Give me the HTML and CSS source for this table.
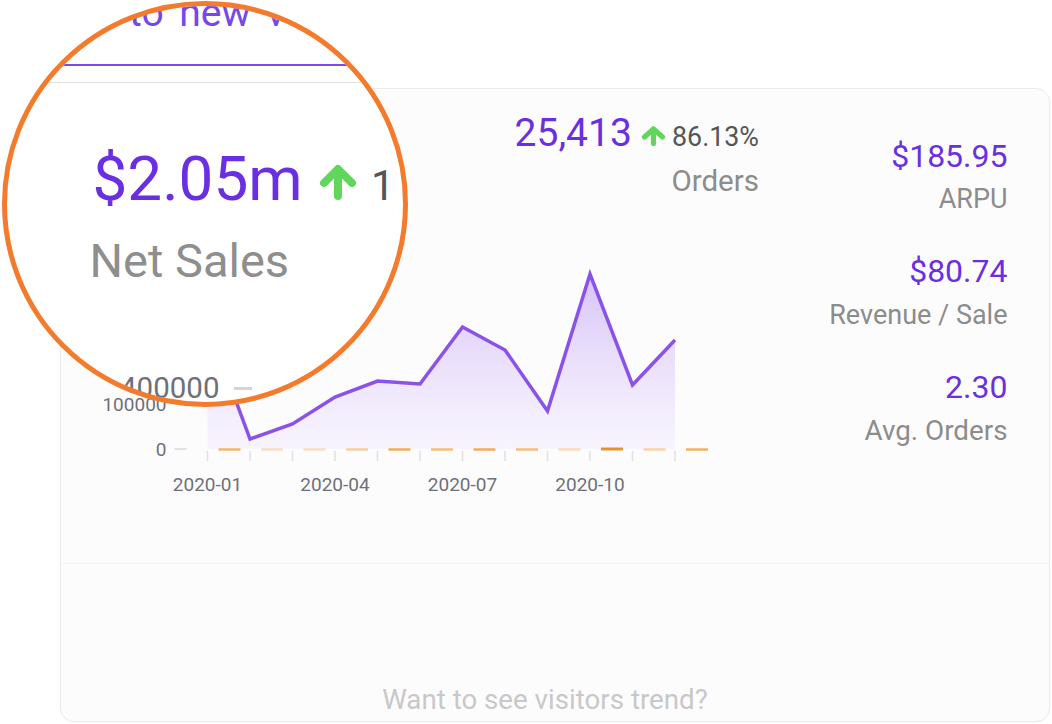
FILE: index.html
```html
<!DOCTYPE html>
<html lang="en">
<head>
<meta charset="utf-8">
<title>Sales overview</title>
<link rel="stylesheet" href="styles.css">
</head>
<body>
<div class="page">
  <div class="topbar"></div>

  <section class="card">
    <div class="card-top">
      <div class="main">
        <div class="kpis">
          <div class="kpi kpi-orders">
            <div class="kpi-value">
              <span class="num">25,413</span>
              <svg class="up" viewBox="0 0 25 20"><path d="M12.5 17.5V5M3.5 11L12.5 2.8L21.5 11"/></svg>
              <span class="pct">86.13%</span>
            </div>
            <div class="kpi-label label-orders">Orders</div>
          </div>
        </div>

        <svg class="chart" width="697" height="290" viewBox="61.5 230 697 290">
          <defs>
            <linearGradient id="area" gradientUnits="userSpaceOnUse" x1="0" y1="275" x2="0" y2="450">
              <stop offset="0" stop-color="#b795f2" stop-opacity="0.55"/>
              <stop offset="1" stop-color="#efe6ff" stop-opacity="0.35"/>
            </linearGradient>
          </defs>
          <g class="ylabels">
            <text x="167" y="411.5">100000</text>
            <text x="167" y="456.5">0</text>
          </g>
          <g class="yticks">
            <line x1="175" y1="405" x2="187" y2="405"/>
            <line x1="175" y1="450" x2="187" y2="450"/>
          </g>
          <path class="area" d="M208 325L250.5 440L293 425L335.5 398L378 382L420.5 385L463 328L505.5 351L548 412L590.5 275L633 386L675.5 341L675.5 450L208 450Z"/>
          <path class="line" d="M208 325L250.5 440L293 425L335.5 398L378 382L420.5 385L463 328L505.5 351L548 412L590.5 275L633 386L675.5 341"/>
          <g class="xticks">
            <line x1="208" y1="452" x2="208" y2="462"/>
            <line x1="250.5" y1="452" x2="250.5" y2="462"/>
            <line x1="293" y1="452" x2="293" y2="462"/>
            <line x1="335.5" y1="452" x2="335.5" y2="462"/>
            <line x1="378" y1="452" x2="378" y2="462"/>
            <line x1="420.5" y1="452" x2="420.5" y2="462"/>
            <line x1="463" y1="452" x2="463" y2="462"/>
            <line x1="505.5" y1="452" x2="505.5" y2="462"/>
            <line x1="548" y1="452" x2="548" y2="462"/>
            <line x1="590.5" y1="452" x2="590.5" y2="462"/>
            <line x1="633" y1="452" x2="633" y2="462"/>
            <line x1="675.5" y1="452" x2="675.5" y2="462"/>
          </g>
          <g class="dashes">
            <line x1="219" y1="450.5" x2="241" y2="450.5" opacity="0.8"/>
            <line x1="261.5" y1="450.5" x2="283.5" y2="450.5" opacity="0.3"/>
            <line x1="304" y1="450.5" x2="326" y2="450.5" opacity="0.3"/>
            <line x1="346.5" y1="450.5" x2="368.5" y2="450.5" opacity="0.5"/>
            <line x1="389" y1="450.5" x2="411" y2="450.5" opacity="0.9"/>
            <line x1="431.5" y1="450.5" x2="453.5" y2="450.5" opacity="0.7"/>
            <line x1="474" y1="450.5" x2="496" y2="450.5" opacity="0.9"/>
            <line x1="516.5" y1="450.5" x2="538.5" y2="450.5" opacity="0.7"/>
            <line x1="559" y1="450.5" x2="581" y2="450.5" opacity="0.35"/>
            <line class="dash-strong" x1="601.5" y1="450" x2="623.5" y2="450"/>
            <line x1="644" y1="450.5" x2="666" y2="450.5" opacity="0.45"/>
            <line x1="686.5" y1="450.5" x2="708.5" y2="450.5" opacity="0.85"/>
          </g>
          <g class="xlabels">
            <text x="208" y="492">2020-01</text>
            <text x="335.5" y="492">2020-04</text>
            <text x="463" y="492">2020-07</text>
            <text x="590.5" y="492">2020-10</text>
          </g>
        </svg>
      </div>

      <div class="side">
        <div class="stat">
          <div class="stat-value">$185.95</div>
          <div class="stat-label">ARPU</div>
        </div>
        <div class="stat">
          <div class="stat-value">$80.74</div>
          <div class="stat-label">Revenue / Sale</div>
        </div>
        <div class="stat">
          <div class="stat-value">2.30</div>
          <div class="stat-label">Avg. Orders</div>
        </div>
      </div>
    </div>
    <div class="card-foot">Want to see visitors trend?</div>
  </section>

  <div class="lens">
    <div class="lens-tab">to new version</div>
    <div class="lens-card">
      <div class="lens-value">
        <span class="lens-num">$2.05m</span>
        <svg class="lens-up" viewBox="0 0 40 37"><path d="M20 33V10M6 20L20 6L34 20"/></svg>
        <span class="lens-pct">1</span>
      </div>
      <div class="lens-label">Net Sales</div>
      <div class="lens-axis">
        <span class="lens-axis-text">400000</span>
        <span class="lens-tick"></span>
      </div>
    </div>
  </div>
</div>
</body>
</html>
```

FILE: styles.css
```css
* {
  box-sizing: border-box;
}

html,
body {
  margin: 0;
  padding: 0;
  background: #ffffff;
}

body {
  font-family: Roboto, "Liberation Sans", sans-serif;
  color: #333;
}

.page {
  position: relative;
  width: 1052px;
  height: 724px;
  overflow: hidden;
  background: #ffffff;
}

.topbar {
  height: 88px;
}

/* card */
.card {
  margin-left: 60px;
  width: 990px;
  height: 634px;
  border: 1.5px solid #ebebeb;
  border-radius: 14px;
  background: #fdfcfd;
  box-shadow: 0 1px 2px rgba(0, 0, 0, 0.03);
  display: flex;
  flex-direction: column;
}

.card-top {
  height: 475px;
  border-bottom: 1.5px solid #f2f1f2;
  display: grid;
  grid-template-columns: 1fr 290px;
}

.main {
  padding-top: 25.4px;
  min-width: 0;
}

.kpis {
  height: 115px;
  display: flex;
  justify-content: flex-end;
  align-items: flex-start;
}

.kpi-value {
  display: flex;
  align-items: baseline;
  justify-content: flex-end;
  white-space: nowrap;
}

.num {
  font-size: 39px;
  line-height: 1;
  color: #6a2fe2;
}

.up {
  flex: none;
  width: 25px;
  height: 20px;
  margin-left: 9.4px;
  margin-bottom: -2.3px;
}

.up path,
.lens-up path {
  fill: none;
  stroke: #62d65c;
  stroke-width: 5.2;
  stroke-linecap: round;
  stroke-linejoin: round;
}

.lens-up path {
  stroke-width: 8;
}

.pct {
  margin-left: 5.8px;
  font-size: 26.8px;
  line-height: 1;
  color: #555555;
}

.kpi-label {
  text-align: right;
  line-height: 1;
  color: #8c8c8c;
}

.label-orders {
  margin-top: 14.1px;
  font-size: 29.5px;
}

/* chart */
.chart {
  display: block;
}

.chart text {
  font-family: Roboto, "Liberation Sans", sans-serif;
  font-size: 19px;
  fill: #6e7079;
}

.ylabels text {
  text-anchor: end;
}

.xlabels text {
  text-anchor: middle;
}

.yticks line {
  stroke: #d9d9d9;
  stroke-width: 1.5;
}

.xticks line {
  stroke: #e0e0e0;
  stroke-width: 1.5;
}

.area {
  fill: url(#area);
}

.line {
  fill: none;
  stroke: #8a52ea;
  stroke-width: 3.5;
  stroke-linejoin: miter;
  stroke-miterlimit: 10;
}

.dashes line {
  stroke: #f3a446;
  stroke-width: 2.5;
}

.dashes .dash-strong {
  stroke: #e8912c;
  stroke-width: 3;
}

/* right column */
.side {
  padding: 50.6px 41.5px 0 0;
  display: flex;
  flex-direction: column;
  align-items: flex-end;
  gap: 41.8px;
  text-align: right;
}

.stat-value {
  font-size: 32px;
  line-height: 1;
  color: #6a2fe2;
}

.stat-label {
  margin-top: 14.7px;
  font-size: 27px;
  line-height: 1;
  color: #8c8c8c;
  white-space: nowrap;
}

.stat:last-child .stat-label {
  font-size: 27.8px;
}

/* footer */
.card-foot {
  flex: 1;
  display: flex;
  align-items: flex-end;
  justify-content: center;
  padding: 0 20px 7px 0;
  font-size: 27.7px;
  line-height: 1;
  color: #c8c8c8;
}

/* magnifying lens over the top-left of the card */
.lens {
  position: absolute;
  left: 2px;
  top: 1px;
  width: 406px;
  height: 406px;
  border: 5px solid #f47b2c;
  border-radius: 50%;
  overflow: hidden;
  background: #ffffff;
  white-space: nowrap;
}

.lens-tab {
  margin-top: -11.8px;
  padding: 0 0 30.8px 122px;
  border-bottom: 2px solid #7a4bef;
  font-size: 39px;
  line-height: 1;
  word-spacing: 6px;
  color: #7448ea;
}

.lens-card {
  margin-top: 15.5px;
  border-top: 1.5px solid #e2e2e2;
}

.lens-value {
  display: flex;
  align-items: baseline;
  margin-top: 65.8px;
  padding-left: 85.5px;
}

.lens-num {
  flex: none;
  font-size: 62px;
  line-height: 1;
  color: #6a2fe2;
}

.lens-up {
  flex: none;
  width: 40px;
  height: 37px;
  margin-left: 15.3px;
  margin-bottom: -4px;
}

.lens-pct {
  flex: none;
  margin-left: 13px;
  font-size: 42px;
  line-height: 1;
  color: #555555;
}

.lens-label {
  margin-top: 26.4px;
  padding-left: 82.5px;
  font-size: 47px;
  line-height: 1;
  color: #8e8e8e;
}

.lens-axis {
  display: flex;
  align-items: center;
  margin-top: 90px;
  padding-left: 113px;
}

.lens-axis-text {
  font-size: 29.5px;
  line-height: 1;
  color: #6e7079;
}

.lens-tick {
  width: 18px;
  height: 3px;
  margin-left: 15px;
  background: #d4d4d4;
}
```
